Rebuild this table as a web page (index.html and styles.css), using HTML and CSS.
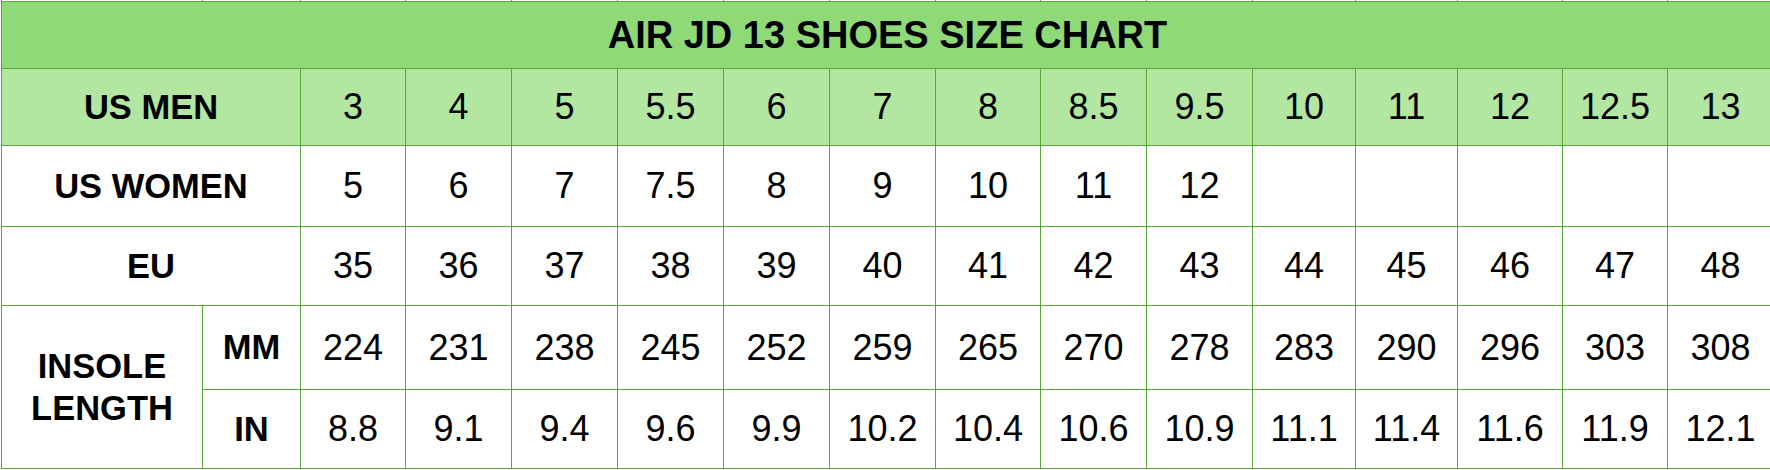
FILE: index.html
```html
<!DOCTYPE html>
<html lang="en">
<head>
<meta charset="utf-8">
<title>AIR JD 13 Shoes Size Chart</title>
<link rel="stylesheet" href="styles.css">
</head>
<body>
<div class="chart">
  <div class="stub"></div><div class="stub"></div><div class="stub"></div><div class="stub"></div>
  <div class="stub"></div><div class="stub"></div><div class="stub"></div><div class="stub"></div>
  <div class="stub"></div><div class="stub"></div><div class="stub"></div><div class="stub"></div>
  <div class="stub"></div><div class="stub"></div><div class="stub"></div><div class="stub"></div>

  <div class="cell title">AIR JD 13 SHOES SIZE CHART</div>

  <div class="cell label wide men">US MEN</div>
  <div class="cell num men">3</div><div class="cell num men">4</div><div class="cell num men">5</div>
  <div class="cell num men">5.5</div><div class="cell num men">6</div><div class="cell num men">7</div>
  <div class="cell num men">8</div><div class="cell num men">8.5</div><div class="cell num men">9.5</div>
  <div class="cell num men">10</div><div class="cell num men">11</div><div class="cell num men">12</div>
  <div class="cell num men">12.5</div><div class="cell num men">13</div>

  <div class="cell label wide">US WOMEN</div>
  <div class="cell num">5</div><div class="cell num">6</div><div class="cell num">7</div>
  <div class="cell num">7.5</div><div class="cell num">8</div><div class="cell num">9</div>
  <div class="cell num">10</div><div class="cell num">11</div><div class="cell num">12</div>
  <div class="cell num"></div><div class="cell num"></div><div class="cell num"></div>
  <div class="cell num"></div><div class="cell num"></div>

  <div class="cell label wide">EU</div>
  <div class="cell num">35</div><div class="cell num">36</div><div class="cell num">37</div>
  <div class="cell num">38</div><div class="cell num">39</div><div class="cell num">40</div>
  <div class="cell num">41</div><div class="cell num">42</div><div class="cell num">43</div>
  <div class="cell num">44</div><div class="cell num">45</div><div class="cell num">46</div>
  <div class="cell num">47</div><div class="cell num">48</div>

  <div class="cell label insole">INSOLE<br>LENGTH</div>
  <div class="cell label">MM</div>
  <div class="cell num">224</div><div class="cell num">231</div><div class="cell num">238</div>
  <div class="cell num">245</div><div class="cell num">252</div><div class="cell num">259</div>
  <div class="cell num">265</div><div class="cell num">270</div><div class="cell num">278</div>
  <div class="cell num">283</div><div class="cell num">290</div><div class="cell num">296</div>
  <div class="cell num">303</div><div class="cell num">308</div>

  <div class="cell label">IN</div>
  <div class="cell num">8.8</div><div class="cell num">9.1</div><div class="cell num">9.4</div>
  <div class="cell num">9.6</div><div class="cell num">9.9</div><div class="cell num">10.2</div>
  <div class="cell num">10.4</div><div class="cell num">10.6</div><div class="cell num">10.9</div>
  <div class="cell num">11.1</div><div class="cell num">11.4</div><div class="cell num">11.6</div>
  <div class="cell num">11.9</div><div class="cell num">12.1</div>
</div>
</body>
</html>
```

FILE: styles.css
```css
html, body {
  margin: 0;
  padding: 0;
  background: #ffffff;
  overflow: hidden;
}

body {
  font-family: "Liberation Sans", Arial, sans-serif;
  color: #000000;
}

.chart {
  display: grid;
  grid-template-columns:
    200px 97px
    104px 105px 105px 105px 105px 105px 104px 105px
    105px 102px 101px 104px 104px 105px;
  grid-template-rows: 1px 66px 76px 80px 78px 83px 78px;
  gap: 1px;
  background: #5aa83a;
  margin-left: 1px;
  padding: 0 0 1px 1px;
  width: max-content;
}

.stub {
  background: #ffffff;
}

.cell {
  background: #ffffff;
  display: flex;
  align-items: center;
  justify-content: center;
  text-align: center;
  white-space: nowrap;
}

.title {
  grid-column: 1 / -1;
  background: #8fda77;
  font-weight: 700;
  font-size: 38px;
}

.label {
  font-weight: 700;
  font-size: 34.5px;
}

.wide {
  grid-column: span 2;
}

.insole {
  grid-row: span 2;
  line-height: 42px;
}

.num {
  font-size: 36px;
}

.men {
  background: #b3e6a1;
}
```
